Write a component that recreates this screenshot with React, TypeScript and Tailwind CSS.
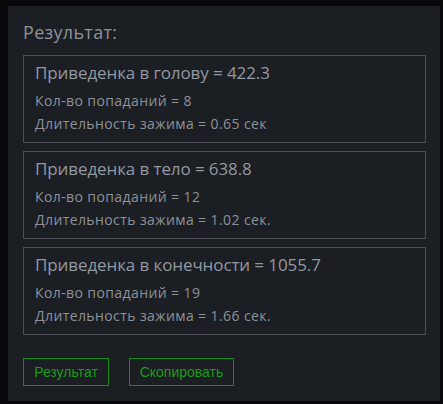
const results = [
  { title: 'Приведенка в голову = 422.3', hits: 8, hold: '0.65 сек' },
  { title: 'Приведенка в тело = 638.8', hits: 12, hold: '1.02 сек.' },
  { title: 'Приведенка в конечности = 1055.7', hits: 19, hold: '1.66 сек.' },
];

const ResultCard = ({ title, hits, hold }: { title: string; hits: number; hold: string }) => (
  <div className="h-[88px] w-[403px] border border-[#4a4d52] px-[11px] pt-[6px]">
    <p className="text-[17px] leading-[22px] tracking-[-0.1px] text-[#9298a0]">{title}</p>
    <p className="mt-[5px] text-[14px] leading-[23px] tracking-[0.4px] text-[#8c9299]">Кол-во попаданий = {hits}</p>
    <p className="text-[14px] leading-[23px] tracking-[0.4px] text-[#8c9299]">Длительность зажима = {hold}</p>
  </div>
);

export default function App() {
  return (
    <div className="h-[404px] w-[443px] overflow-hidden bg-[#08090b] pl-[8px] pt-[6px] font-['Open_Sans',sans-serif]">
      <div className="h-[395px] w-[432px] bg-[#1b1e23] px-[15px] pt-[14px]">
        <h2 className="text-[18px] leading-[24px] tracking-[0.3px] text-[#8d939a]">Результат:</h2>
        <div className="mt-[11px] flex flex-col gap-[8px]">
          {results.map((r) => (
            <ResultCard key={r.title} {...r} />
          ))}
        </div>
        <div className="mt-[23px] flex gap-[20px] font-['Liberation_Sans',Arial,sans-serif]">
          <button className="h-[28px] w-[86px] border border-[#178a17] text-[14px] text-[#1c9c1c]">Результат</button>
          <button className="h-[28px] w-[105px] border border-[#178a17] text-[14px] text-[#1c9c1c]">Скопировать</button>
        </div>
      </div>
    </div>
  );
}
